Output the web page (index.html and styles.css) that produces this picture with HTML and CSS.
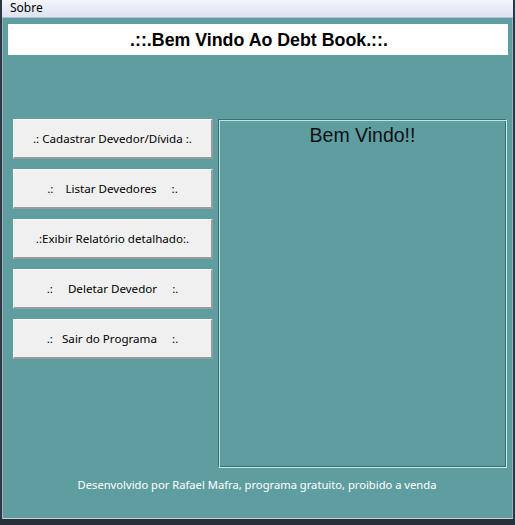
FILE: index.html
```html
<!DOCTYPE html>
<html lang="pt">
<head>
<meta charset="utf-8">
<title>Debt Book</title>
<link rel="stylesheet" href="styles.css">
</head>
<body>
<div class="window">
  <div class="menubar"><span class="menu-item">Sobre</span></div>
  <div class="client">
    <div class="title-box">.::.Bem Vindo Ao Debt Book.::.</div>
    <div class="main">
      <div class="buttons">
        <button class="btn">.: Cadastrar Devedor/Dívida :.</button>
        <button class="btn">.:    Listar Devedores     :.</button>
        <button class="btn">.:Exibir Relatório detalhado:.</button>
        <button class="btn">.:     Deletar Devedor     :.</button>
        <button class="btn">.:   Sair do Programa     :.</button>
      </div>
      <div class="panel">
        <div class="panel-title">Bem Vindo!!</div>
      </div>
    </div>
    <div class="footer">Desenvolvido por Rafael Mafra, programa gratuito, proibido a venda</div>
  </div>
</div>
</body>
</html>
```
FILE: styles.css
```css
html, body {
  margin: 0;
  padding: 0;
  width: 515px;
  height: 525px;
  overflow: hidden;
  background: #27303d;
}
.window {
  width: 515px;
  height: 519px;
  box-sizing: border-box;
  border-left: 2px solid #2c3845;
  border-right: 2px solid #2c3845;
  display: flex;
  flex-direction: column;
}
.menubar {
  height: 17px;
  border-bottom: 1px solid #b7c0d0;
  background: linear-gradient(#f3f5fb, #dde3f0);
  font-family: "Noto Sans", "Open Sans", sans-serif;
  font-size: 12px;
  line-height: 16px;
  color: #000;
}
.menu-item {
  display: inline-block;
  padding-left: 8px;
}
.client {
  flex: 1;
  background: #5f9ea0;
  border-left: 1px solid #9fb0b8;
  border-right: 1px solid #9fb0b8;
  border-bottom: 1px solid #c8d0d6;
  padding: 6px 4px 0 5px;
  display: flex;
  flex-direction: column;
}
.title-box {
  background: #fff;
  height: 31px;
  line-height: 33px;
  text-align: center;
  font-family: "Liberation Sans", Arial, sans-serif;
  font-weight: bold;
  font-size: 17.8px;
  color: #000;
  padding-left: 2px;
}
.main {
  display: flex;
  margin-top: 64px;
  padding-left: 5px;
  gap: 5px;
}
.buttons {
  display: flex;
  flex-direction: column;
  gap: 11px;
}
.btn {
  width: 200px;
  height: 40px;
  margin: 0;
  padding: 0;
  background: #f0f0f0;
  border-top: 1px solid #ffffff;
  border-left: 1px solid #ffffff;
  border-right: 2px solid #9a9a9a;
  border-bottom: 2px solid #9a9a9a;
  font-family: "Noto Sans", "Open Sans", sans-serif;
  font-size: 11.6px;
  color: #000;
  white-space: pre;
  text-align: center;
}
.buttons .btn + .btn {
  margin-top: -1px;
}
.panel {
  width: 289px;
  height: 349px;
  box-sizing: border-box;
  border-top: 1px solid #3f6f71;
  border-left: 1px solid #3f6f71;
  border-right: 1px solid #c2ecec;
  border-bottom: 1px solid #c2ecec;
  box-shadow: inset 1px 1px 0 #b8e4e4, inset -1px -1px 0 #3f6f71;
}
.panel-title {
  text-align: center;
  font-family: "Liberation Sans", Arial, sans-serif;
  font-size: 19.5px;
  color: #111;
  margin-top: 4px;
}
.footer {
  margin-top: 9px;
  text-align: center;
  font-family: "Noto Sans", "Open Sans", sans-serif;
  font-size: 11.2px;
  color: #fff;
  padding-right: 2px;
}
```
